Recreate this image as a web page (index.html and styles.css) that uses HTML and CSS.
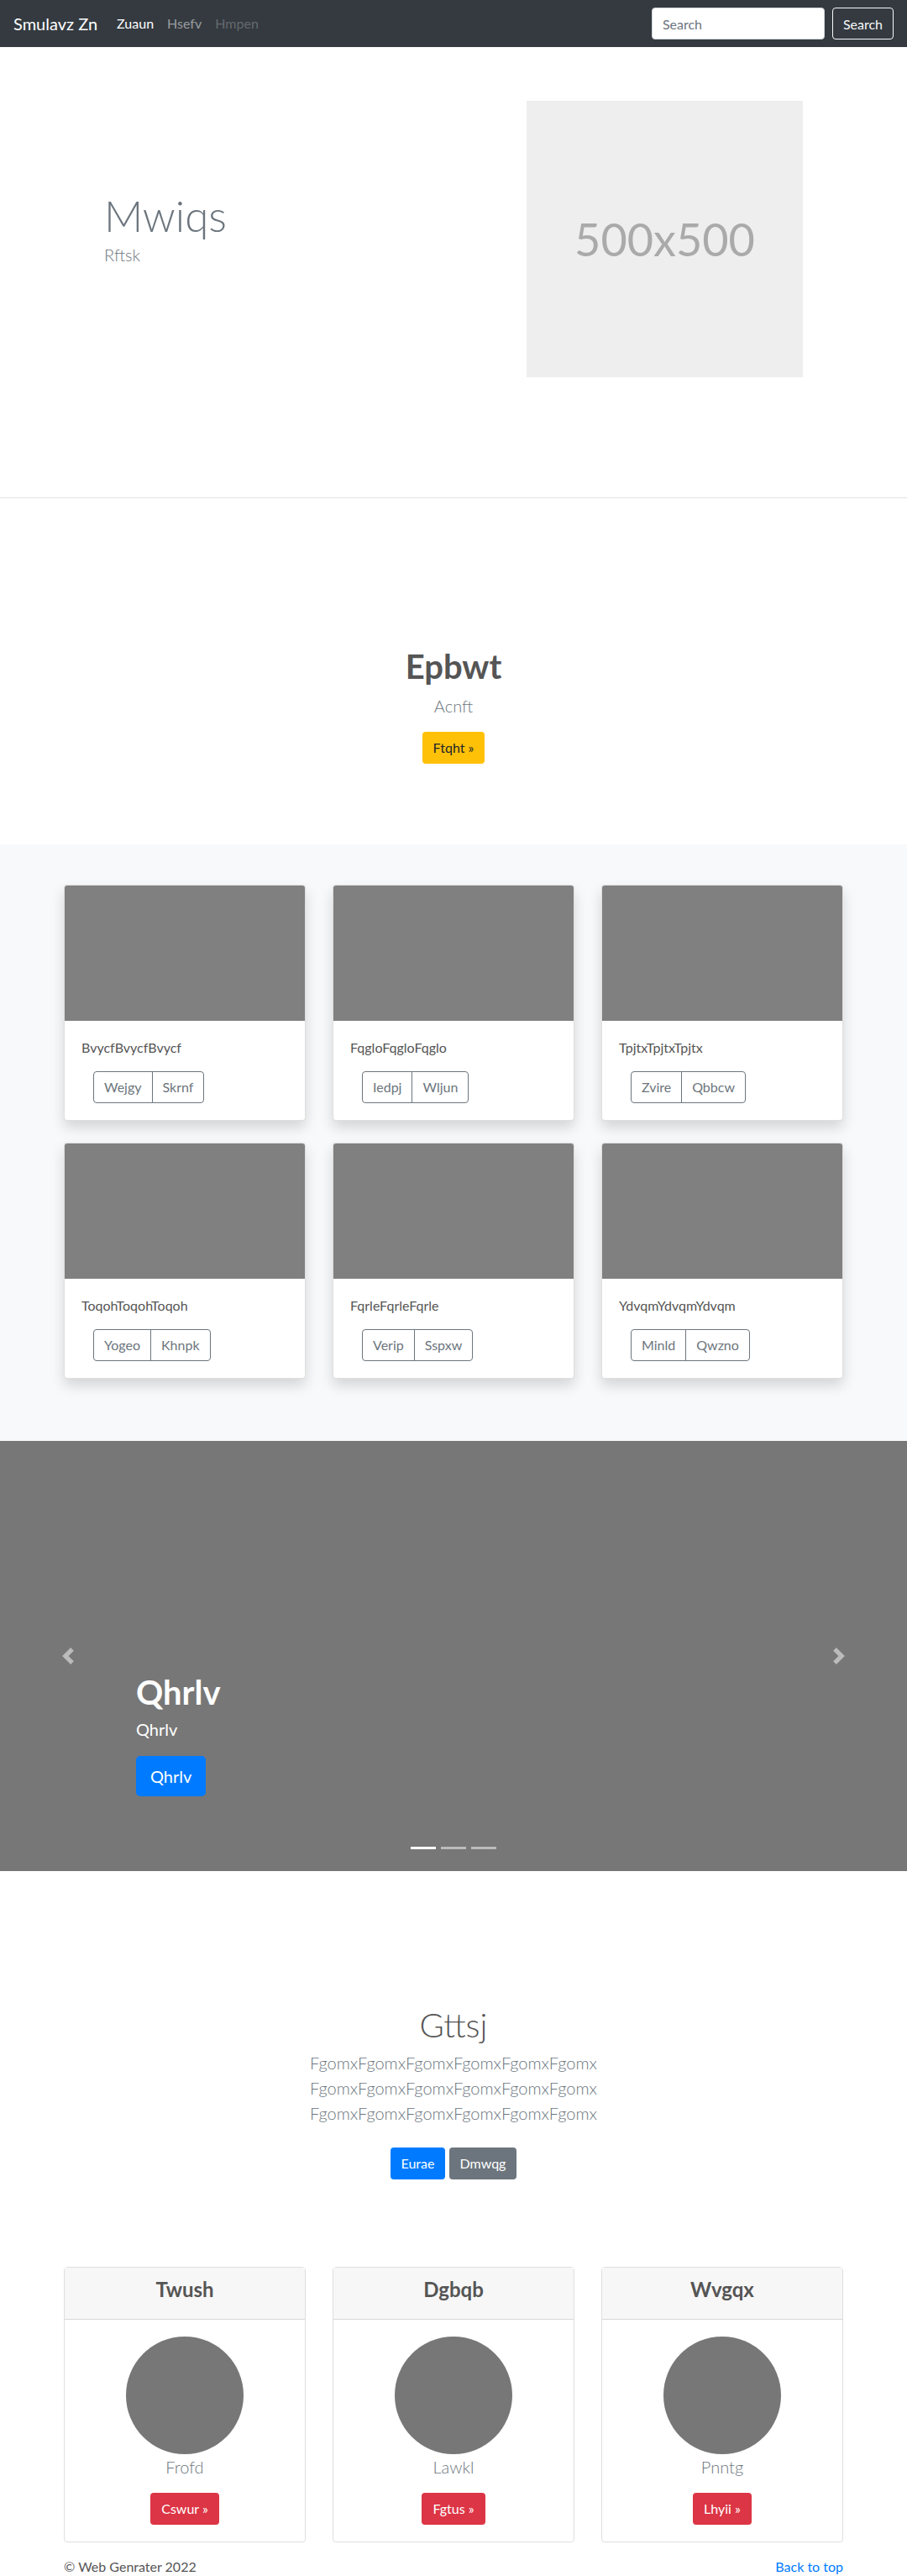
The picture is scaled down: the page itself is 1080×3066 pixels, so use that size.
FILE: index.html
```html
<!DOCTYPE html>
<html lang="en">
<head>
  <meta charset="UTF-8">
  <meta name="viewport" content="width=device-width, initial-scale=1.0">
  <title>Smulavz Zn</title>
  <link rel="stylesheet" href="styles.css">
</head>
<body>

<nav class="navbar">
  <a class="brand" href="#">Smulavz Zn</a>
  <ul class="nav-links">
    <li><a class="active" href="#">Zuaun</a></li>
    <li><a href="#">Hsefv</a></li>
    <li><a class="disabled" href="#">Hmpen</a></li>
  </ul>
  <form class="search">
    <input type="text" placeholder="Search">
    <button type="button">Search</button>
  </form>
</nav>

<section class="hero">
  <div class="hero-inner">
    <div class="hero-text">
      <h1>Mwiqs</h1>
      <p>Rftsk</p>
    </div>
    <div class="placeholder">500x500</div>
  </div>
</section>

<section class="jumbo">
  <h1>Epbwt</h1>
  <p class="lead">Acnft</p>
  <a class="btn btn-warning" href="#">Ftqht &raquo;</a>
</section>

<section class="album">
  <div class="grid">
    <div class="card">
      <div class="card-img"></div>
      <div class="card-body">
        <p>BvycfBvycfBvycf</p>
        <div class="btn-group"><a href="#">Wejgy</a><a href="#">Skrnf</a></div>
      </div>
    </div>
    <div class="card">
      <div class="card-img"></div>
      <div class="card-body">
        <p>FqgloFqgloFqglo</p>
        <div class="btn-group"><a href="#">Iedpj</a><a href="#">Wljun</a></div>
      </div>
    </div>
    <div class="card">
      <div class="card-img"></div>
      <div class="card-body">
        <p>TpjtxTpjtxTpjtx</p>
        <div class="btn-group"><a href="#">Zvire</a><a href="#">Qbbcw</a></div>
      </div>
    </div>
    <div class="card">
      <div class="card-img"></div>
      <div class="card-body">
        <p>ToqohToqohToqoh</p>
        <div class="btn-group"><a href="#">Yogeo</a><a href="#">Khnpk</a></div>
      </div>
    </div>
    <div class="card">
      <div class="card-img"></div>
      <div class="card-body">
        <p>FqrleFqrleFqrle</p>
        <div class="btn-group"><a href="#">Verip</a><a href="#">Sspxw</a></div>
      </div>
    </div>
    <div class="card">
      <div class="card-img"></div>
      <div class="card-body">
        <p>YdvqmYdvqmYdvqm</p>
        <div class="btn-group"><a href="#">Minld</a><a href="#">Qwzno</a></div>
      </div>
    </div>
  </div>
</section>

<section class="carousel">
  <a class="control prev" href="#">
    <svg width="20" height="20" viewBox="0 0 8 8" fill="#fff"><path d="M5.25 0l-4 4 4 4 1.5-1.5L4.25 4l2.5-2.5L5.25 0z"/></svg>
  </a>
  <div class="caption">
    <h1>Qhrlv</h1>
    <p>Qhrlv</p>
    <a class="btn btn-lg btn-primary" href="#">Qhrlv</a>
  </div>
  <a class="control next" href="#">
    <svg width="20" height="20" viewBox="0 0 8 8" fill="#fff"><path d="M2.75 0l-1.5 1.5L3.75 4l-2.5 2.5L2.75 8l4-4-4-4z"/></svg>
  </a>
  <ol class="indicators">
    <li class="active"></li>
    <li></li>
    <li></li>
  </ol>
</section>

<section class="intro">
  <h1>Gttsj</h1>
  <p class="lead">FgomxFgomxFgomxFgomxFgomxFgomx<br>FgomxFgomxFgomxFgomxFgomxFgomx<br>FgomxFgomxFgomxFgomxFgomxFgomx</p>
  <p class="actions">
    <a class="btn btn-primary" href="#">Eurae</a>
    <a class="btn btn-secondary" href="#">Dmwqg</a>
  </p>
</section>

<section class="people">
  <div class="person">
    <div class="person-head"><h4>Twush</h4></div>
    <div class="person-body">
      <div class="avatar"></div>
      <p>Frofd</p>
      <a class="btn btn-danger" href="#">Cswur &raquo;</a>
    </div>
  </div>
  <div class="person">
    <div class="person-head"><h4>Dgbqb</h4></div>
    <div class="person-body">
      <div class="avatar"></div>
      <p>Lawkl</p>
      <a class="btn btn-danger" href="#">Fgtus &raquo;</a>
    </div>
  </div>
  <div class="person">
    <div class="person-head"><h4>Wvgqx</h4></div>
    <div class="person-body">
      <div class="avatar"></div>
      <p>Pnntg</p>
      <a class="btn btn-danger" href="#">Lhyii &raquo;</a>
    </div>
  </div>
</section>

<footer class="footer">
  <p>&copy; Web Genrater 2022</p>
  <a href="#">Back to top</a>
</footer>

</body>
</html>
```
FILE: styles.css
```css
body {
  margin: 0;
  font-family: Lato, "Open Sans", sans-serif;
  font-size: 16px;
  line-height: 1.5;
  color: #555;
  background: #fff;
}
a {
  text-decoration: none;
}
h1, h4, p {
  margin-top: 0;
}

/* navbar */
.navbar {
  display: flex;
  align-items: center;
  height: 56px;
  padding: 0 16px;
  background: #343a40;
}
.brand {
  color: #fff;
  font-size: 20px;
  line-height: 30px;
  margin-right: 15px;
}
.nav-links {
  display: flex;
  list-style: none;
  margin: 0;
  padding: 0;
  flex: 1;
}
.nav-links a {
  display: block;
  padding: 8px;
  color: rgba(255,255,255,.5);
}
.nav-links a.active {
  color: #fff;
}
.nav-links a.disabled {
  color: rgba(255,255,255,.25);
}
.search {
  display: flex;
  margin: 0;
}
.search input {
  width: 206px;
  height: 38px;
  box-sizing: border-box;
  padding: 6px 12px;
  margin-right: 9px;
  border: 1px solid #ced4da;
  border-radius: 4px;
  font-family: inherit;
  font-size: 16px;
  color: #495057;
}
.search input::placeholder {
  color: #6c757d;
}
.search button {
  height: 38px;
  padding: 6px 12px;
  border: 1px solid #f8f9fa;
  border-radius: 4px;
  background: transparent;
  color: #f8f9fa;
  font-family: inherit;
  font-size: 16px;
}

/* hero */
.hero {
  padding: 64px 0 143px;
  border-bottom: 1px solid #e5e5e5;
}
.hero-inner {
  width: 960px;
  margin: 0 auto;
  padding: 0 64px;
  box-sizing: border-box;
  display: flex;
  align-items: center;
  justify-content: space-between;
}
.hero-text h1 {
  font-size: 51px;
  font-weight: 300;
  line-height: 1.2;
  color: #6c757d;
  margin-bottom: 0;
}
.hero-text p {
  font-size: 20px;
  font-weight: 300;
  line-height: 30px;
  color: #6c757d;
  margin-bottom: 25px;
}
.placeholder {
  width: 329px;
  height: 329px;
  background: #eee;
  color: #aaa;
  font-size: 54px;
  display: flex;
  align-items: center;
  justify-content: center;
}

/* jumbo */
.jumbo {
  padding: 176px 0 96px;
  text-align: center;
}
.jumbo h1 {
  font-size: 40px;
  font-weight: 700;
  line-height: 1.2;
  margin-bottom: 8px;
}
.lead {
  font-size: 20px;
  font-weight: 300;
  line-height: 30px;
  color: #6c757d;
  margin-bottom: 16px;
}

/* buttons */
.btn {
  display: inline-block;
  padding: 6px 12px;
  font-size: 16px;
  line-height: 24px;
  border: 1px solid transparent;
  border-radius: 4px;
  vertical-align: middle;
}
.btn-lg {
  padding: 8px 16px;
  font-size: 20px;
  line-height: 30px;
  border-radius: 5px;
}
.btn-warning {
  background: #ffc107;
  color: #212529;
}
.btn-primary {
  background: #007bff;
  color: #fff;
}
.btn-secondary {
  background: #6c757d;
  color: #fff;
}
.btn-danger {
  background: #dc3545;
  color: #fff;
}

/* album */
.album {
  background: #f8f9fa;
  padding: 48px 0 74px;
}
.grid {
  width: 928px;
  margin: 0 auto;
  display: grid;
  grid-template-columns: repeat(3, 288px);
  column-gap: 32px;
  row-gap: 26px;
}
.card {
  background: #fff;
  border: 1px solid rgba(0,0,0,.125);
  border-radius: 4px;
  overflow: hidden;
  box-shadow: 0 8px 16px rgba(0,0,0,.15);
}
.card-img {
  height: 161px;
  background: #808080;
}
.card-body {
  padding: 20px;
}
.card-body p {
  margin-bottom: 16px;
}
.btn-group {
  display: inline-flex;
  margin-left: 14px;
}
.btn-group a {
  padding: 6px 12px;
  line-height: 24px;
  border: 1px solid #6c757d;
  color: #6c757d;
}
.btn-group a:first-child {
  border-radius: 4px 0 0 4px;
}
.btn-group a + a {
  margin-left: -1px;
  border-radius: 0 4px 4px 0;
}

/* carousel */
.carousel {
  position: relative;
  height: 512px;
  background: #777;
  display: flex;
  align-items: flex-end;
  box-sizing: border-box;
  padding: 0 15% 89px;
}
.caption {
  color: #fff;
}
.caption h1 {
  font-size: 40px;
  font-weight: 700;
  line-height: 1.2;
  margin-bottom: 8px;
}
.caption p {
  font-size: 20px;
  line-height: 24px;
  margin-bottom: 20px;
}
.control {
  position: absolute;
  top: 0;
  bottom: 0;
  width: 15%;
  display: flex;
  align-items: center;
  justify-content: center;
  opacity: .5;
}
.control.prev {
  left: 0;
}
.control.next {
  right: 0;
}
.indicators {
  position: absolute;
  left: 0;
  right: 0;
  bottom: 26px;
  display: flex;
  justify-content: center;
  list-style: none;
  margin: 0;
  padding: 0;
}
.indicators li {
  width: 30px;
  height: 3px;
  margin: 0 3px;
  background: rgba(255,255,255,.5);
}
.indicators li.active {
  background: #fff;
}

/* intro */
.intro {
  padding: 159px 0 0;
  text-align: center;
}
.intro h1 {
  font-size: 40px;
  font-weight: 300;
  line-height: 1.2;
  margin-bottom: 6px;
}
.intro .lead {
  margin-bottom: 26px;
}
.actions {
  margin-bottom: 104px;
}

/* people */
.people {
  width: 928px;
  margin: 0 auto;
  display: grid;
  grid-template-columns: repeat(3, 288px);
  column-gap: 32px;
}
.person {
  border: 1px solid rgba(0,0,0,.125);
  border-radius: 4px;
  text-align: center;
}
.person-head {
  background: #f7f7f7;
  border-bottom: 1px solid rgba(0,0,0,.125);
  padding: 12px 20px;
}
.person-head h4 {
  font-size: 24px;
  font-weight: 700;
  line-height: 1.2;
  margin-bottom: 8px;
}
.person-body {
  padding: 20px;
}
.avatar {
  width: 140px;
  height: 140px;
  margin: 0 auto;
  border-radius: 50%;
  background: #777;
}
.person-body p {
  font-size: 20px;
  font-weight: 300;
  line-height: 30px;
  color: #6c757d;
  margin-bottom: 16px;
}

/* footer */
.footer {
  width: 928px;
  margin: 0 auto;
  padding-top: 17px;
  display: flex;
  justify-content: space-between;
}
.footer p {
  margin: 0;
}
.footer a {
  color: #007bff;
}
```
